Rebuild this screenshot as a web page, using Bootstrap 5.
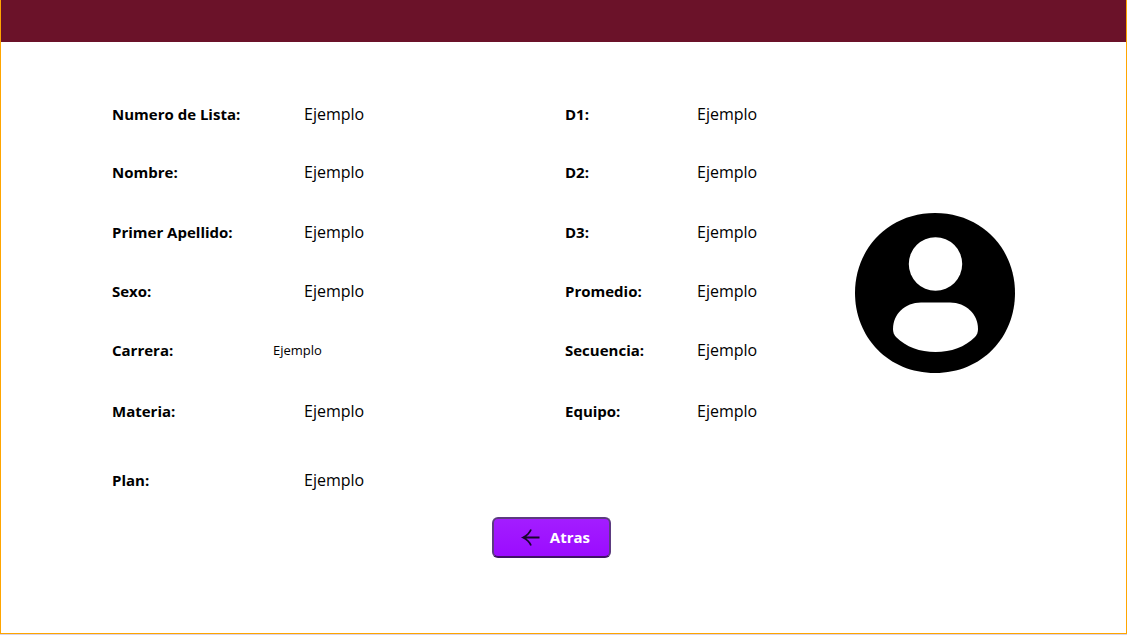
<!DOCTYPE html>
<html lang="es">
<head>
<meta charset="utf-8">
<meta name="viewport" content="width=device-width, initial-scale=1">
<title>Datos del alumno</title>
<link href="https://cdn.jsdelivr.net/npm/bootstrap@5.3.0/dist/css/bootstrap.min.css" rel="stylesheet">
<style>
body { font-family: "Open Sans", "Noto Sans", sans-serif; font-size: 16px; line-height: 24px; color: #000; border-bottom: 1px solid #d8d4e8; }
.frame { border: 1px solid #ffa500; border-top: 0; }
.topbar { height: 42px; background: #6b1229; }
.content { padding: 44px 111px 0; }
.sheet { display: grid; grid-template-columns: 453fr 290fr 160px; }
.fields { display: grid; grid-template-rows: 56px 60px repeat(3, 59px) 64px 74px; align-items: center; align-content: start; }
.fields dt, .fields dd { margin: 0; }
.fields dt { font-size: 15px; }
.student { grid-template-columns: 192fr 261fr; }
.grades { grid-template-columns: 132fr 158fr; }
.fields .compact { font-size: 13px; margin-left: -31px; }
.avatar { margin-top: 127px; }
.back { width: 119px; height: 41px; border: 2px solid #5c3b80; border-bottom-color: #401266; border-radius: 6px; padding: 0 19px 0 0; background: linear-gradient(#a31dff, #9b0cff); color: #fff; font-size: 15px; font-weight: 700; }
.back:hover { background: #9000f0; border-color: #401266; color: #fff; }
</style>
</head>
<body class="min-vh-100 d-flex flex-column bg-white">
<div class="frame flex-grow-1">
  <header class="topbar"></header>
  <main class="content">
    <div class="sheet">
      <dl class="fields student mb-0">
        <dt>Numero de Lista:</dt><dd>Ejemplo</dd>
        <dt>Nombre:</dt><dd>Ejemplo</dd>
        <dt>Primer Apellido:</dt><dd>Ejemplo</dd>
        <dt>Sexo:</dt><dd>Ejemplo</dd>
        <dt>Carrera:</dt><dd class="compact">Ejemplo</dd>
        <dt>Materia:</dt><dd>Ejemplo</dd>
        <dt>Plan:</dt><dd>Ejemplo</dd>
      </dl>
      <dl class="fields grades mb-0">
        <dt>D1:</dt><dd>Ejemplo</dd>
        <dt>D2:</dt><dd>Ejemplo</dd>
        <dt>D3:</dt><dd>Ejemplo</dd>
        <dt>Promedio:</dt><dd>Ejemplo</dd>
        <dt>Secuencia:</dt><dd>Ejemplo</dd>
        <dt>Equipo:</dt><dd>Ejemplo</dd>
      </dl>
      <svg class="avatar" width="160" height="160" viewBox="0 0 160 160" role="img" aria-label="Alumno">
        <path d="M80 0C127 0 160 36 160 80S127 160 80 160 0 124 0 80 33 0 80 0Z"/>
        <circle cx="80.500" cy="51" r="26.700" fill="#fff"/>
        <path fill="#fff" d="M66 89.500H95C111 89.500 123 101 123 116C123 119 122 122 120 124C110 134 96 139 80.500 139S51 134 41 124C39 122 38 119 38 116C38 101 50 89.500 66 89.500Z"/>
      </svg>
    </div>
    <div class="d-flex justify-content-center pe-4">
      <button type="button" class="btn back d-inline-flex align-items-center justify-content-end">
        <svg class="me-2" width="22" height="20" viewBox="0 0 22 20" fill="none" stroke="#17052b" stroke-width="1.800" aria-hidden="true"><path d="M19.500 9.500H3M11 1.500Q9 6.500 3 9.500Q9 12.500 11 17.500"/></svg>
        Atras
      </button>
    </div>
  </main>
</div>
<script src="https://cdn.jsdelivr.net/npm/bootstrap@5.3.0/dist/js/bootstrap.bundle.min.js"></script>
</body>
</html>
